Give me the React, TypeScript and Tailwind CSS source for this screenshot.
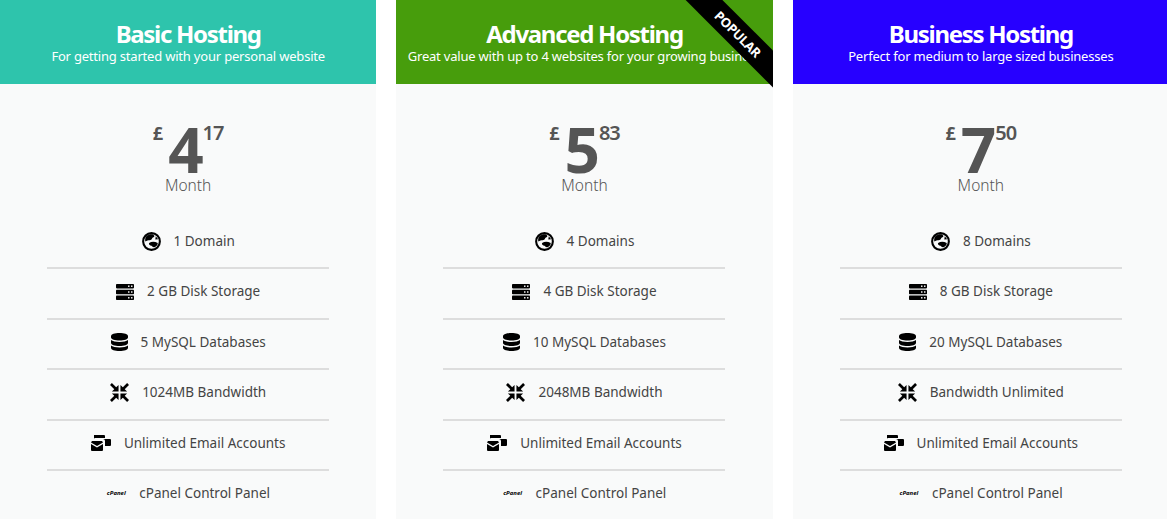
interface Plan {
  title: string;
  tagline: string;
  color: string;
  pounds: string;
  pence: string;
  features: string[];
  popular?: boolean;
}

const plans: Plan[] = [
  {
    title: 'Basic Hosting',
    tagline: 'For getting started with your personal website',
    color: 'bg-[#2ec4ac]',
    pounds: '4',
    pence: '17',
    features: ['1 Domain', '2 GB Disk Storage', '5 MySQL Databases', '1024MB Bandwidth', 'Unlimited Email Accounts', 'cPanel Control Panel'],
  },
  {
    title: 'Advanced Hosting',
    tagline: 'Great value with up to 4 websites for your growing business',
    color: 'bg-[#479d0c]',
    pounds: '5',
    pence: '83',
    features: ['4 Domains', '4 GB Disk Storage', '10 MySQL Databases', '2048MB Bandwidth', 'Unlimited Email Accounts', 'cPanel Control Panel'],
    popular: true,
  },
  {
    title: 'Business Hosting',
    tagline: 'Perfect for medium to large sized businesses',
    color: 'bg-[#2700ff]',
    pounds: '7',
    pence: '50',
    features: ['8 Domains', '8 GB Disk Storage', '20 MySQL Databases', 'Bandwidth Unlimited', 'Unlimited Email Accounts', 'cPanel Control Panel'],
  },
];

const GlobeIcon = () => (
  <svg viewBox="0 0 20 20" className="w-[19px] h-[19px]" fill="none">
    <circle cx="10" cy="10" r="8.800" stroke="black" strokeWidth="2.200" />
    <path d="M5 4c3-2 7-2.500 8 0 .5 1.500-2 1.500-2.500 3C10 9 6.500 8 3.500 10 3 8 3.500 5.500 5 4z" fill="black" />
    <path d="M7.500 11.500c2.500-1.500 6-1.500 9 0 .5 1.500-1.500 4-3.500 4.500-1.500.5-2-1-3-1.500-1.500-.5-3.500-1.500-2.500-3z" fill="black" />
    <path d="M14.500 4.500l2.500 3-3 .5z" fill="black" />
  </svg>
);

const ServerIcon = () => (
  <svg viewBox="0 0 18 16" className="w-[18px] h-[16px]" fill="black">
    <rect x="0" y="0" width="18" height="4.400" rx="0.800" />
    <rect x="0" y="5.800" width="18" height="4.400" rx="0.800" />
    <rect x="0" y="11.600" width="18" height="4.400" rx="0.800" />
    <g fill="white">
      <rect x="12" y="1.500" width="1.500" height="1.400" />
      <rect x="15" y="1.500" width="1.500" height="1.400" />
      <rect x="12" y="7.300" width="1.500" height="1.400" />
      <rect x="15" y="7.300" width="1.500" height="1.400" />
      <rect x="12" y="13.100" width="1.500" height="1.400" />
      <rect x="15" y="13.100" width="1.500" height="1.400" />
    </g>
  </svg>
);

const DatabaseIcon = () => (
  <svg viewBox="0 0 17 18" className="w-[17px] h-[18px]" fill="black">
    <path d="M0 3c0-1.700 3.800-3 8.500-3S17 1.300 17 3v1.500c0 1.700-3.800 3-8.500 3S0 6.200 0 4.500z" />
    <path d="M0 7c1.500 1.300 4.700 2 8.500 2S15.500 8.300 17 7v3c0 1.700-3.800 3-8.500 3S0 11.700 0 10z" />
    <path d="M0 12.500c1.500 1.300 4.700 2 8.500 2s7-.7 8.500-2V15c0 1.700-3.800 3-8.500 3S0 16.700 0 15z" />
  </svg>
);

const ArrowsIcon = () => (
  <svg viewBox="0 0 20 20" className="w-[19px] h-[19px]" fill="black">
    <path d="M2 0 0 2l4.500 4.500L2 9h7V2L6.500 4.500z" />
    <path d="M18 0 20 2l-4.500 4.500L18 9h-7V2l2.500 2.500z" />
    <path d="M2 20 0 18l4.500-4.500L2 11h7v7l-2.500-2.500z" />
    <path d="M18 20 20 18l-4.500-4.500L18 11h-7v7l2.500-2.500z" />
  </svg>
);

const MailIcon = () => (
  <svg viewBox="0 0 20 16" className="w-[20px] h-[16px]" fill="black">
    <path d="M3 0h10a1 1 0 0 1 1 1v2H4a1 1 0 0 0-1 1z" />
    <path d="M10 4h9a1 1 0 0 1 1 1v5a1 1 0 0 1-1 1h-5V6a2 2 0 0 0-2-2z" />
    <path d="M0 7.500 1 6h10l1 1.500L6 11z" />
    <path d="M0 9l6 3.500L12 9v6a1 1 0 0 1-1 1H1a1 1 0 0 1-1-1z" />
  </svg>
);

const icons = [
  <GlobeIcon />,
  <ServerIcon />,
  <DatabaseIcon />,
  <ArrowsIcon />,
  <MailIcon />,
  <span className="font-bold italic text-[6px] leading-none text-black w-[20px] text-center">cPanel</span>,
];

function PlanCard({ plan }: { plan: Plan }) {
  return (
    <div className="bg-[#f9fafa] relative overflow-hidden h-[519px]">
      <div className={`${plan.color} h-[84px] pt-[18px] text-center text-white`}>
        <h2 className="text-[24px] leading-[31px] font-bold tracking-[-1.300px]">{plan.title}</h2>
        <p className="text-[13px] leading-[14px] tracking-[-0.200px] whitespace-nowrap">{plan.tagline}</p>
      </div>
      {plan.popular && (
        <div className="absolute top-[21px] right-[-35px] w-[140px] h-[26px] leading-[26px] rotate-45 bg-black text-white text-center text-[13px] font-bold tracking-[-0.300px]">
          POPULAR
        </div>
      )}
      <div className="flex flex-col items-center text-[#555] pt-[36px]">
        <div className="flex items-start h-[55px] font-bold">
          <span className="text-[18px] leading-[26px] mr-[5px]">£</span>
          <span className="text-[62px] leading-[52px] mt-[3px]">{plan.pounds}</span>
          <span className="text-[20px] leading-[26px] font-semibold tracking-[-1px] ml-[-1px]">{plan.pence}</span>
        </div>
        <div className="text-[15.500px] leading-[20px] font-light">Month</div>
      </div>
      <ul className="mx-auto w-[282px] mt-[24px]">
        {plan.features.map((feature, i) => (
          <li
            key={feature}
            className={`flex items-center justify-center gap-[13px] h-[50.400px] pb-[4px] text-[13.500px] text-[#444] border-b-2 ${i < 5 ? 'border-[#ddd]' : 'border-transparent'}`}
          >
            {icons[i]}
            <span>{feature}</span>
          </li>
        ))}
      </ul>
    </div>
  );
}

export default function App() {
  return (
    <div className="w-[1167px] h-[519px] overflow-hidden bg-white font-['Noto_Sans',sans-serif]">
      <div className="grid grid-cols-3 gap-[20px] w-[1169px]">
        {plans.map(plan => (
          <PlanCard key={plan.title} plan={plan} />
        ))}
      </div>
    </div>
  );
}
